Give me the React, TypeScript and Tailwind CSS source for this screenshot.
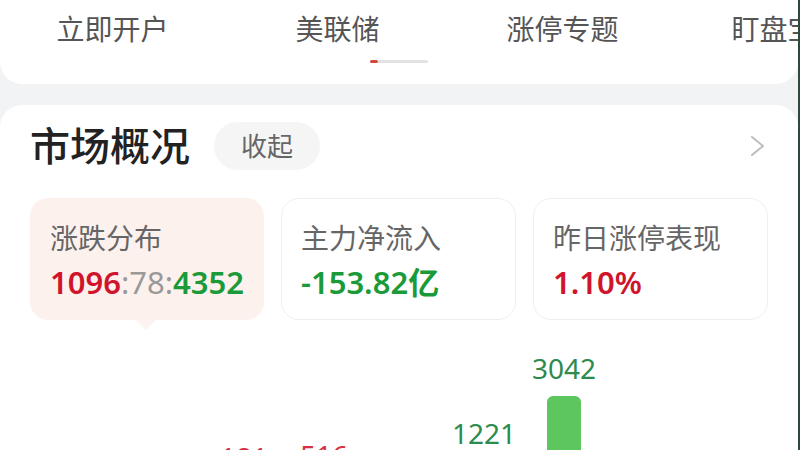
import React from "react";

const tabs = ["立即开户", "美联储", "涨停专题", "盯盘宝典"];

type Col = { label: string; h: number; tone: "up" | "flat" | "down" };

const cols: Col[] = [
  { label: "12", h: 20, tone: "up" },
  { label: "45", h: 24, tone: "up" },
  { label: "181", h: 85, tone: "up" },
  { label: "516", h: 87, tone: "up" },
  { label: "78", h: 30, tone: "flat" },
  { label: "1221", h: 109, tone: "down" },
  { label: "3042", h: 174, tone: "down" },
  { label: "89", h: 40, tone: "down" },
  { label: "20", h: 24, tone: "down" },
];

const labelTone = {
  up: "text-[#d4333f]",
  flat: "text-[#999999]",
  down: "text-[#2e8b4e]",
};
const barTone = {
  up: "bg-[#f06a6a]",
  flat: "bg-[#cccccc]",
  down: "bg-[#5ec65f]",
};

export default function App() {
  return (
    <div
      className="w-[800px] h-[450px] overflow-hidden bg-[#f2f3f5] flex flex-col border-r-2 border-[#2d4a3a]"
      style={{ fontFamily: '"Noto Sans", "Noto Sans CJK SC", sans-serif' }}
    >
      {/* tab strip */}
      <div className="h-[84px] shrink-0 bg-white rounded-b-[22px] flex flex-col">
        <div className="h-[58px] flex items-center">
          {tabs.map((t) => (
            <div
              key={t}
              className="w-[225px] shrink-0 flex justify-center text-[28px] leading-[32px] text-[#555555] whitespace-nowrap"
            >
              {t}
            </div>
          ))}
        </div>
        <div className="mt-[2px] flex justify-center">
          <div className="flex h-[3px]">
            <div className="w-[8px] bg-[#d2483a] rounded-full" />
            <div className="w-[50px] bg-[#e2e2e2] rounded-full" />
          </div>
        </div>
      </div>

      {/* market overview */}
      <div className="mt-[21px] flex-1 bg-white rounded-t-[22px] px-[30px] pt-[17px]">
        <div className="h-[48px] flex items-center">
          <div className="text-[40px] leading-[48px] font-medium text-[#222222]">市场概况</div>
          <div className="ml-[24px] h-[48px] px-[27px] rounded-full bg-[#f5f5f5] flex items-center text-[26px] leading-[30px] text-[#666666]">
            收起
          </div>
          <svg className="ml-auto mr-[2px]" width="16" height="22" viewBox="0 0 16 22" fill="none">
            <polyline points="2,2 13,11 2,20" stroke="#bdbdbd" strokeWidth="2" strokeLinecap="round" strokeLinejoin="round" />
          </svg>
        </div>

        <div className="mt-[28px] flex gap-[17px]">
          <div className="relative flex-1 h-[122px] rounded-[18px] bg-[#fdf1ee] pl-[20px] pt-[24px]">
            <div className="text-[28px] leading-[32px] text-[#666666]">涨跌分布</div>
            <div className="mt-[10px] text-[31px] leading-[36px] font-semibold">
              <span className="text-[#d0142c]">1096</span>
              <span className="text-[#999999] font-normal">:78:</span>
              <span className="text-[#1a9a38]">4352</span>
            </div>
            <div className="absolute left-[106px] -bottom-[10px] w-0 h-0 border-l-[10px] border-r-[10px] border-t-[10px] border-l-transparent border-r-transparent border-t-[#fdf3f1]" />
          </div>
          <div className="flex-1 h-[122px] rounded-[18px] bg-white border-[1.5px] border-[#efefef] pl-[19px] pt-[23px]">
            <div className="text-[28px] leading-[32px] text-[#666666]">主力净流入</div>
            <div className="mt-[10px] text-[31px] leading-[36px] font-semibold text-[#1a9a38]">-153.82亿</div>
          </div>
          <div className="flex-1 h-[122px] rounded-[18px] bg-white border-[1.5px] border-[#efefef] pl-[19px] pt-[23px]">
            <div className="text-[28px] leading-[32px] text-[#666666]">昨日涨停表现</div>
            <div className="mt-[10px] text-[31px] leading-[36px] font-semibold text-[#d0142c]">1.10%</div>
          </div>
        </div>

        {/* distribution bars */}
        <div className="mt-[20px] h-[230px] pl-[14px] flex items-end">
          {cols.map((c, i) => (
            <div key={i} className="w-[80px] shrink-0 flex flex-col items-center">
              <div className={`text-[28px] leading-[32px] ${labelTone[c.tone]}`}>{c.label}</div>
              <div
                className={`mt-[12px] w-[34px] rounded-t-[6px] ${barTone[c.tone]}`}
                style={{ height: c.h }}
              />
            </div>
          ))}
        </div>
      </div>
    </div>
  );
}
